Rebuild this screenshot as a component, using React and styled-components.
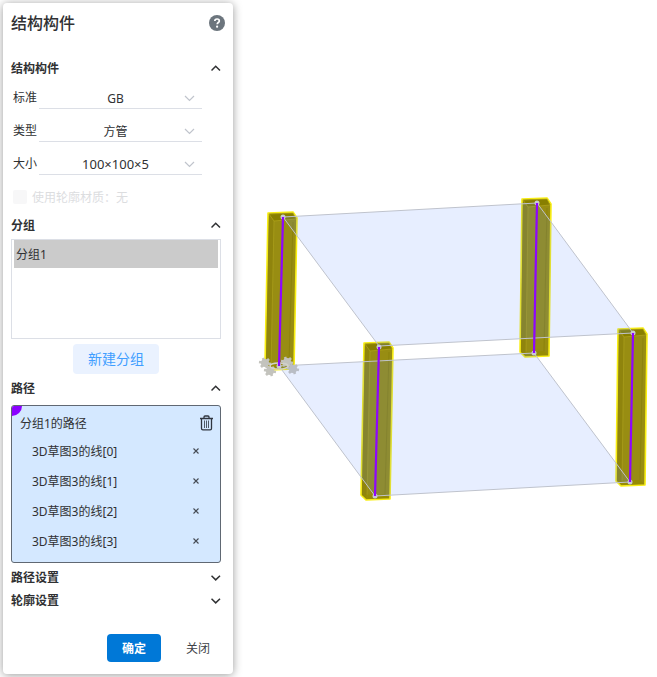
import React, { useState } from 'react';
import styled, { createGlobalStyle } from 'styled-components';

const GlobalStyle = createGlobalStyle`
  * {
    box-sizing: border-box;
  }

  body {
    margin: 0;
    background: #ffffff;
    color: #303133;
    font-family: 'Noto Sans', 'Noto Sans CJK SC', sans-serif;
    font-size: 12px;
  }

  button, select, input {
    font: inherit;
    color: inherit;
  }
`;

const Page = styled.div`
  display: flex;
  align-items: flex-start;
  min-height: 100vh;
`;

const Panel = styled.aside`
  display: flex;
  flex-direction: column;
  flex: 0 0 230px;
  margin: 3px;
  padding: 8px 8px 12px;
  background: #ffffff;
  border-radius: 4px;
  box-shadow: 0 1px 10px rgba(0, 0, 0, 0.4);
`;

const PanelHeader = styled.header`
  display: flex;
  align-items: center;
  justify-content: space-between;
  height: 24px;
  margin-bottom: 22px;
`;

const PanelBody = styled.div`
  display: flex;
  flex-direction: column;
  padding-right: 4px;
`;

const Title = styled.h1`
  margin: 0;
  font-size: 16px;
  line-height: 24px;
  font-weight: 500;
`;

const IconButton = styled.button`
  display: flex;
  padding: 0;
  border: 0;
  background: none;
  cursor: pointer;
`;

const SectionToggle = styled.button`
  display: flex;
  align-items: center;
  justify-content: space-between;
  width: 100%;
  height: 23px;
  padding: 0;
  border: 0;
  background: none;
  font-weight: 600;
  line-height: 23px;
  cursor: pointer;
`;

const Fields = styled.div`
  display: grid;
  gap: 11px;
  padding: 6px 19px 5px 2px;
`;

const Field = styled.label`
  display: grid;
  grid-template-columns: 26px 1fr;
  align-items: center;
  height: 22px;
  line-height: 24px;
`;

const SelectBox = styled.span`
  display: grid;
  grid-template-columns: 1fr 18px;
  align-items: center;
  height: 22px;
  border-bottom: 1px solid #dcdfe6;

  svg {
    grid-area: 1 / 2;
    pointer-events: none;
  }
`;

const Select = styled.select`
  grid-area: 1 / 1 / 2 / 3;
  width: 100%;
  height: 21px;
  padding: 2px 10px 0 0;
  border: 0;
  appearance: none;
  background: none;
  font-size: ${props => props.$wide ? '13px' : '12px'};
  line-height: 19px;
  text-align: center;
  text-align-last: center;
`;

const CheckLabel = styled.label`
  display: flex;
  align-items: center;
  gap: 5px;
  height: 24px;
  color: #dcdddf;
`;

const Checkbox = styled.input`
  width: 14px;
  height: 14px;
  margin: 0;
  appearance: none;
  background: #f7f7f8;
  border-radius: 2px;
`;

const GroupList = styled.div`
  height: 100px;
  margin-top: 2px;
  padding: 0 2px;
  border: 1px solid #dcdfe6;
`;

const GroupItem = styled.button`
  display: block;
  width: 100%;
  height: 28px;
  padding: 2px 2px 0;
  border: 0;
  background: ${props => props.$active ? '#cbcbcb' : 'transparent'};
  line-height: 26px;
  text-align: left;
`;

const NewGroupButton = styled.button`
  align-self: center;
  width: 86px;
  height: 30px;
  margin: 5px 0 3px;
  padding: 0;
  border: 0;
  border-radius: 4px;
  background: #eaf2ff;
  color: #409eff;
  font-size: 14px;
  line-height: 28px;
  cursor: pointer;
`;

const PathBox = styled.div`
  position: relative;
  margin: 5px 0 3px;
  padding: 2px 7px 6px 8px;
  overflow: hidden;
  border: 1px solid #606873;
  border-radius: 3px;
  background: #d4e8ff;
`;

const ColorMark = styled.span`
  position: absolute;
  top: 0;
  left: 0;
  width: 10px;
  height: 10px;
  border-bottom-right-radius: 10px;
  background: #8b00ff;
`;

const PathHeader = styled.div`
  display: flex;
  align-items: center;
  justify-content: space-between;
  height: 28px;
  padding-top: 2px;
`;

const PathList = styled.ul`
  margin: 0;
  padding: 0 14px 0 12px;
  list-style: none;
`;

const PathItem = styled.li`
  display: flex;
  align-items: center;
  justify-content: space-between;
  height: 30px;
`;

const Footer = styled.footer`
  display: flex;
  justify-content: flex-end;
  gap: 10px;
  margin-top: 22px;
`;

const FooterButton = styled.button`
  width: 54px;
  height: 28px;
  padding: 0;
  border: 0;
  border-radius: 4px;
  background: ${props => props.$primary ? '#0078d7' : 'transparent'};
  color: ${props => props.$primary ? '#ffffff' : '#404247'};
  font-weight: ${props => props.$primary ? 600 : 400};
  cursor: pointer;
`;

const Viewport = styled.main`
  flex: 1;
  min-width: 0;

  svg {
    display: block;
    width: 100%;
  }
`;

const Chevron = ({ open, light }) => (
  <svg width={light ? 12 : 10} height="8" viewBox={light ? '0 0 12 8' : '0 0 10 8'} fill="none">
    <path
      d={light ? 'M1 2 5.5 6.5 10 2' : open ? 'M.5 5.5 4.7 1.3 9 5.5' : 'M.5 1.7 4.7 5.9 9 1.7'}
      stroke={light ? '#c0c4cc' : '#303133'}
      strokeWidth={light ? 1.2 : 1.5}
    />
  </svg>
);

const HelpIcon = () => (
  <svg width="16" height="16" viewBox="0 0 16 16" fill="none">
    <circle cx="8" cy="8" r="8" fill="#6c757d" />
    <path d="M5.8 6.1c0-1.4 1-2.1 2.3-2.1s2.2.7 2.2 1.9c0 1.6-2.1 1.6-2.1 3.3" stroke="#fff" strokeWidth="1.7" />
    <circle cx="8.1" cy="11.7" r="1.1" fill="#fff" />
  </svg>
);

const TrashIcon = () => (
  <svg width="13" height="16" viewBox="0 0 13 16" fill="none" stroke="#303640">
    <path d="M0 3.5h13M4 3.2V2c0-.6.4-1 1-1h3c.6 0 1 .4 1 1v1.2" strokeWidth="1.3" />
    <path d="M1.5 4v9.5c0 .8.6 1.4 1.4 1.4h7.2c.8 0 1.4-.6 1.4-1.4V4" strokeWidth="1.3" />
    <path d="M4.5 5.5v7.5M6.5 5.5v7.5M8.5 5.5v7.5" strokeWidth=".8" />
  </svg>
);

const CloseIcon = () => (
  <svg width="6" height="6" viewBox="0 0 6 6" stroke="#454b54" strokeWidth="1.1">
    <path d="M.5.5l5 5M5.5.5l-5 5" />
  </svg>
);

const Section = ({ title, defaultOpen = false, children }) => {
  const [open, setOpen] = useState(defaultOpen);

  return (
    <>
      <SectionToggle aria-expanded={open} onClick={() => setOpen(!open)}>
        {title}
        <Chevron open={open} />
      </SectionToggle>
      {open && children}
    </>
  );
};

const SelectField = ({ label, value, wide }) => (
  <Field>
    {label}
    <SelectBox>
      <Select $wide={wide} defaultValue={value}>
        <option value={value}>{value}</option>
      </Select>
      <Chevron light />
    </SelectBox>
  </Field>
);

// top and bottom end of every member axis
const members = [
  { top: [283, 217], bottom: [279, 366] },
  { top: [537, 203], bottom: [534, 353] },
  { top: [379, 347], bottom: [375, 496] },
  { top: [633, 333], bottom: [630, 482] },
];

const Tube = ({ top: [tx, ty], bottom: [bx, by] }) => (
  <g strokeLinejoin="round">
    <path
      d={`M${tx - 15} ${ty - 4}L${tx + 10} ${ty - 5}L${tx + 14} ${ty + 1}L${bx + 15} ${by + 3}L${bx - 9} ${by + 4}L${bx - 14} ${by - 1}Z`}
      fill="#988d12"
      stroke="#f8ee14"
      strokeWidth="1.6"
    />
    <path d={`M${tx - 14} ${ty - 2}L${tx - 9} ${ty + 4}L${bx - 8} ${by + 3}L${bx - 13} ${by - 1}Z`} fill="#857c08" opacity=".5" />
    <path d={`M${tx - 14} ${ty - 3}L${tx + 10} ${ty - 4}L${tx + 13} ${ty + 2}L${tx - 9} ${ty + 4}Z`} fill="#887f00" stroke="#b2a51d" strokeWidth=".7" />
    <path d={`M${tx + 10} ${ty + 5}L${bx + 10} ${by - 2}`} stroke="#877e0a" strokeWidth=".7" />
    <path d={`M${tx - 9} ${ty + 4}L${bx - 8} ${by + 3}`} stroke="#aca01d" strokeWidth=".7" />
    <path d={`M${bx - 13} ${by - 1}L${bx + 10} ${by - 2}L${bx + 14} ${by + 2}L${bx - 8} ${by + 3}Z`} fill="#968b00" opacity=".7" />
  </g>
);

const Anchor = ({ x, y, color = '#c3c3bd' }) => (
  <g transform={`translate(${x} ${y})`}>
    <circle r="4" fill={color} />
    <path d="M-6-1 6 1M-2-5 2 5M-4 4 4-4" stroke={color} strokeWidth="2.6" />
  </g>
);

const Scene = () => (
  <svg viewBox="236 0 421 677" preserveAspectRatio="xMinYMin meet" role="img">
    {members.map(member => <Tube key={member.top[0]} {...member} />)}
    <g fill="#5486ff" fillOpacity=".14" stroke="#bfc3cd" strokeWidth="1">
      <path d="M283 217 537 203 633 333 379 346Z" />
      <path d="M279 366 534 353 630 482 375 496Z" />
    </g>
    <Anchor x={265} y={363} />
    <Anchor x={270} y={371} />
    <Anchor x={287} y={362} />
    <Anchor x={293} y={369} color="#b9bdc5" />
    <ellipse cx="279" cy="366" rx="9" ry="3" fill="none" stroke="#d1d1ca" strokeWidth="1.5" />
    {members.map(({ top, bottom }) => (
      <g key={top[0]}>
        <circle cx={top[0]} cy={top[1]} r="2.5" fill="#c9cbd1" />
        <circle cx={bottom[0]} cy={bottom[1]} r="2.5" fill="#c9cbd1" />
        <path d={`M${top} ${bottom}`} stroke="#8e05ff" strokeWidth="2.2" />
      </g>
    ))}
  </svg>
);

const App = () => {
  const [paths, setPaths] = useState([0, 1, 2, 3]);

  return (
    <Page>
      <GlobalStyle />
      <Panel>
        <PanelHeader>
          <Title>结构构件</Title>
          <IconButton aria-label="帮助"><HelpIcon /></IconButton>
        </PanelHeader>

        <PanelBody>
          <Section title="结构构件" defaultOpen>
            <Fields>
              <SelectField label="标准" value="GB" />
              <SelectField label="类型" value="方管" />
              <SelectField label="大小" value="100×100×5" wide />
              <CheckLabel>
                <Checkbox type="checkbox" disabled />
                使用轮廓材质：无
              </CheckLabel>
            </Fields>
          </Section>

          <Section title="分组" defaultOpen>
            <GroupList>
              <GroupItem $active>分组1</GroupItem>
            </GroupList>
            <NewGroupButton>新建分组</NewGroupButton>
          </Section>

          <Section title="路径" defaultOpen>
            <PathBox>
              <ColorMark />
              <PathHeader>
                分组1的路径
                <IconButton aria-label="删除" onClick={() => setPaths([])}><TrashIcon /></IconButton>
              </PathHeader>
              <PathList>
                {paths.map(id => (
                  <PathItem key={id}>
                    3D草图3的线[{id}]
                    <IconButton aria-label="移除" onClick={() => setPaths(paths.filter(p => p !== id))}>
                      <CloseIcon />
                    </IconButton>
                  </PathItem>
                ))}
              </PathList>
            </PathBox>
          </Section>

          <Section title="路径设置" />
          <Section title="轮廓设置" />
        </PanelBody>

        <Footer>
          <FooterButton $primary>确定</FooterButton>
          <FooterButton>关闭</FooterButton>
        </Footer>
      </Panel>

      <Viewport>
        <Scene />
      </Viewport>
    </Page>
  );
};

export default App;
